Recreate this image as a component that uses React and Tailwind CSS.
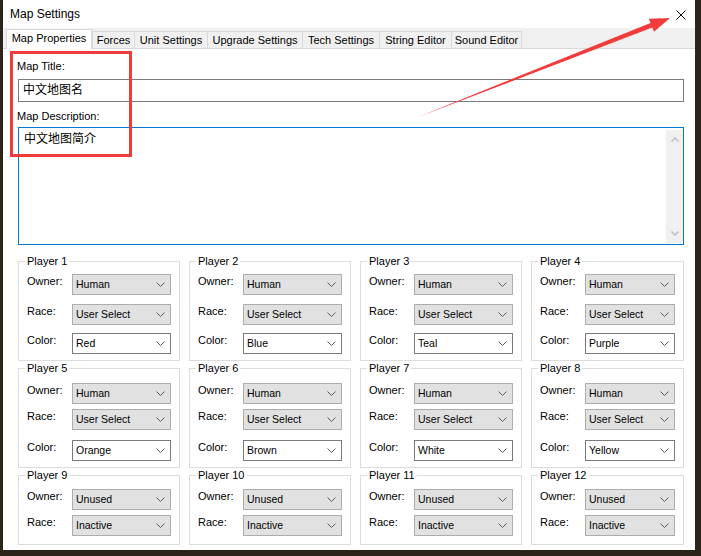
import React from 'react';

const FONT = "font-['Liberation_Sans','Noto_Sans_CJK_SC',sans-serif]";

const tabs = [
    { label: 'Map Properties', w: 'w-[86px]', active: true },
    { label: 'Forces', w: 'w-[43px]' },
    { label: 'Unit Settings', w: 'w-[74px]' },
    { label: 'Upgrade Settings', w: 'w-[96px]' },
    { label: 'Tech Settings', w: 'w-[78px]' },
    { label: 'String Editor', w: 'w-[73px]' },
    { label: 'Sound Editor', w: 'w-[71px]' },
];

const rows = [
    {
        h: 'h-[106px]', top: 'mt-[7px]', gap1: 'mt-[9px]', gap2: 'mt-[8px]',
        players: [
            { n: 1, owner: 'Human', race: 'User Select', color: 'Red' },
            { n: 2, owner: 'Human', race: 'User Select', color: 'Blue' },
            { n: 3, owner: 'Human', race: 'User Select', color: 'Teal' },
            { n: 4, owner: 'Human', race: 'User Select', color: 'Purple' },
        ],
    },
    {
        h: 'h-[106px]', top: 'mt-[9px]', gap1: 'mt-[5px]', gap2: 'mt-[10px]',
        players: [
            { n: 5, owner: 'Human', race: 'User Select', color: 'Orange' },
            { n: 6, owner: 'Human', race: 'User Select', color: 'Brown' },
            { n: 7, owner: 'Human', race: 'User Select', color: 'White' },
            { n: 8, owner: 'Human', race: 'User Select', color: 'Yellow' },
        ],
    },
    {
        h: 'h-[76px]', top: 'mt-[8px]', gap1: 'mt-[5px]', gap2: '',
        players: [
            { n: 9, owner: 'Unused', race: 'Inactive' },
            { n: 10, owner: 'Unused', race: 'Inactive' },
            { n: 11, owner: 'Unused', race: 'Inactive' },
            { n: 12, owner: 'Unused', race: 'Inactive' },
        ],
    },
];

const Chevron = () => (
    <svg width="9" height="5" viewBox="0 0 9 5" className="shrink-0">
        <polyline points="0.5,0.5 4.5,4.5 8.5,0.5" fill="none" stroke="#5a5a5a" strokeWidth="1" />
    </svg>
);

const Combo = ({ value, white }) => (
    <div
        className={`flex-1 h-[21px] flex items-center justify-between pl-[3px] pr-[5px] border text-[10.5px] leading-[13px] text-black ${
            white ? 'bg-white border-[#7a7a7a]' : 'bg-[#e1e1e1] border-[#adadad]'
        }`}
    >
        <span>{value}</span>
        <Chevron />
    </div>
);

const Field = ({ label, value, white, className = '' }) => (
    <div className={`flex items-start ${className}`}>
        <div className="w-[45px] text-[11px] leading-[13px] pt-px text-black">{label}</div>
        <Combo value={value} white={white} />
    </div>
);

const PlayerBox = ({ p, row }) => (
    <fieldset className={`border border-[#dcdcdc] px-[8px] ${row.h} min-w-0`}>
        <legend className="text-[11px] leading-[12px] px-[2px] -ml-[2px] text-black">Player {p.n}</legend>
        <Field label="Owner:" value={p.owner} className={row.top} />
        <Field label="Race:" value={p.race} className={row.gap1} />
        {p.color && <Field label="Color:" value={p.color} white className={row.gap2} />}
    </fieldset>
);

export default function App() {
    return (
        <div className={`relative w-[701px] h-[556px] bg-[#2b2519] overflow-hidden ${FONT}`}>
            <div className="ml-[3px] w-[692px] h-[550px] bg-white flex flex-col">
                {/* title bar */}
                <div className="h-[28px] flex items-center justify-between pl-[7px] pr-[9px]">
                    <span className="text-[12px] leading-[14px] text-black">Map Settings</span>
                    <svg width="10" height="10" viewBox="0 0 10 10" className="mt-[2px]">
                        <path d="M0.5 0.5 L9.5 9.5 M9.5 0.5 L0.5 9.5" stroke="#000" strokeWidth="1" />
                    </svg>
                </div>

                {/* tabs */}
                <div className="h-[21px] bg-[#f0f0f0] border-b border-[#d9d9d9] flex items-end pl-[3px]">
                    {tabs.map((t, i) =>
                        t.active ? (
                            <div
                                key={t.label}
                                className={`${t.w} h-[20px] -mb-px relative z-10 bg-white border border-b-0 border-[#d9d9d9] flex justify-center pt-[2px] text-[11px] leading-[13px] text-black`}
                            >
                                {t.label}
                            </div>
                        ) : (
                            <div
                                key={t.label}
                                className={`${t.w} h-[17px] ${i > 1 ? '-ml-px' : ''} bg-[#f0f0f0] border border-b-0 border-[#d9d9d9] flex justify-center pt-[2px] text-[11px] leading-[13px] text-black`}
                            >
                                {t.label}
                            </div>
                        )
                    )}
                </div>

                {/* page */}
                <div className="flex-1 pl-[15px] pr-[11px] pt-[11px]">
                    <div className="-ml-px text-[11px] leading-[13px] text-black">Map Title:</div>
                    <div className="mt-[6px] h-[23px] border border-[#7a7a7a] flex items-center pl-[4px] text-[12px] leading-[15px] text-black">
                        中文地图名
                    </div>
                    <div className="-ml-px mt-[8px] text-[11px] leading-[13px] text-black">Map Description:</div>
                    <div className="mt-[4px] h-[118px] border border-[#0078d7] flex">
                        <div className="flex-1 pl-[5px] pt-[4px] text-[12px] leading-[15px] text-black">中文地图简介</div>
                        <div className="w-[17px] mt-[2px] mb-[1px] bg-[#f0f0f0] flex flex-col items-center justify-between py-[7px]">
                            <svg width="8" height="5" viewBox="0 0 8 5">
                                <polyline points="0.5,4.5 4,1 7.5,4.5" fill="none" stroke="#c2c2c2" strokeWidth="1.6" />
                            </svg>
                            <svg width="8" height="5" viewBox="0 0 8 5">
                                <polyline points="0.5,0.5 4,4 7.5,0.5" fill="none" stroke="#c2c2c2" strokeWidth="1.6" />
                            </svg>
                        </div>
                    </div>

                    <div className="mt-[10px] grid grid-cols-[162px_162px_162px_1fr] gap-x-[9px] gap-y-[1px]">
                        {rows.map((row) => row.players.map((p) => <PlayerBox key={p.n} p={p} row={row} />))}
                    </div>
                </div>
            </div>

            {/* annotation: red box */}
            <div className="absolute left-[10px] top-[51px] w-[122px] h-[106px] border-[3px] border-[#f23b3b]"></div>

            {/* annotation: red arrow */}
            <svg className="absolute left-0 top-0 pointer-events-none" width="701" height="556" viewBox="0 0 701 556">
                <polygon
                    points="418,117 650.5,23 648.8,18.8 670,18 654,31.8 652.3,27.6"
                    fill="#f23b3b"
                />
            </svg>
        </div>
    );
}
